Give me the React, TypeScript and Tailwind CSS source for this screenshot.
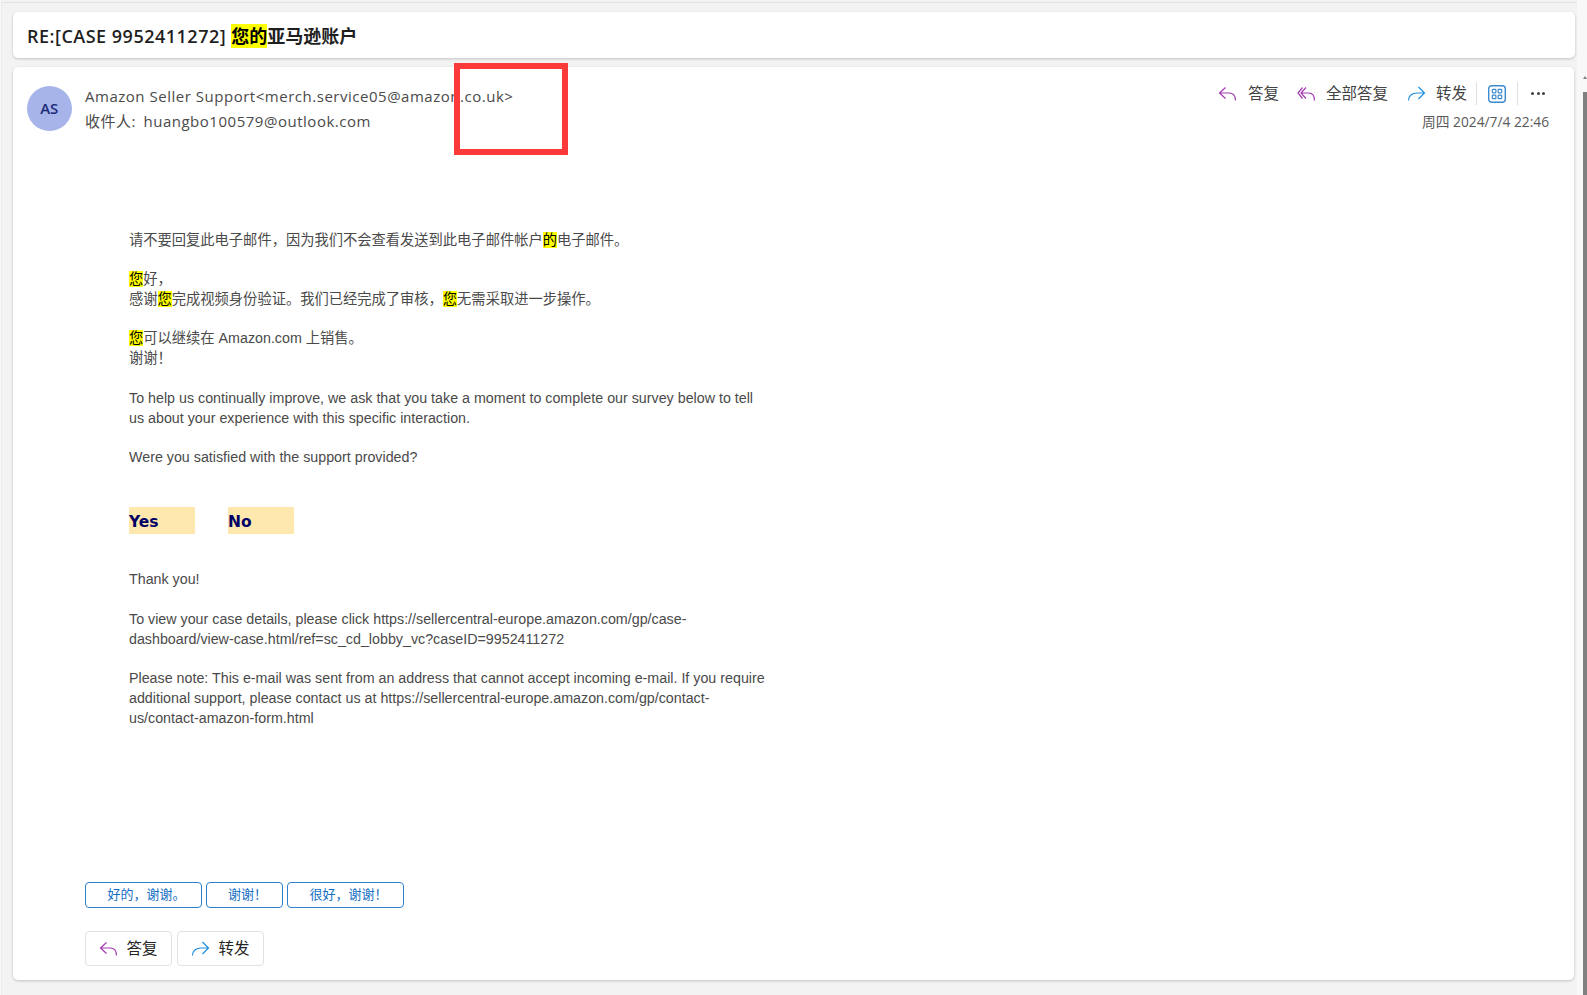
import React from "react";

const CJK = "font-['Open_Sans','Noto_Sans_CJK_SC',sans-serif]";

function ReplyIcon() {
  return (
    <svg width="19" height="16" viewBox="0 0 19 16" fill="none">
      <path d="M7.500 1.500 1.500 7l6 5.500M1.500 7H11c4 0 6.500 2.500 6.500 7.500" stroke="#a33ab0" strokeWidth="1.200" />
    </svg>
  );
}
function ReplyAllIcon() {
  return (
    <svg width="19" height="16" viewBox="0 0 19 16" fill="none">
      <path d="M5.500 1.500 1 7l4.500 5.500M9 1.500 4 7l5 5.500M4 7h7.500c4 0 6 2.500 6 7.500" stroke="#a33ab0" strokeWidth="1.200" />
    </svg>
  );
}
function ForwardIcon() {
  return (
    <svg width="19" height="16" viewBox="0 0 19 16" fill="none">
      <path d="M11.500 1 17.500 7l-6 6M17.500 7H10C5 7 1.500 10 1.500 14.500" stroke="#1f8fe0" strokeWidth="1.200" />
    </svg>
  );
}

const Y = ({ children }: { children: React.ReactNode }) => (
  <span className="bg-[#ffff00] text-black">{children}</span>
);

export default function App() {
  return (
    <div className={`${CJK} relative h-[995px] w-[1587px] overflow-hidden bg-[#f8f8f8]`}>
      <div className="ml-px h-[995px] w-[1576px] border-l border-[#ebebeb] bg-[#f3f3f3] pt-[2px]">
        <div className="h-px bg-[#e2e2e2]" />
        <div className="flex flex-col gap-[9px] pl-[11px] pt-[9px]">
          <div className="flex h-[46px] w-[1562px] items-center rounded-[5px] bg-white pl-[14px] shadow-[0_1px_3px_rgba(0,0,0,0.2)]">
            <h1 className="translate-y-px text-[18px] font-semibold text-[#1f1f1f]">
              <span className="tracking-[0.5px]">RE:[CASE 9952411272] </span><Y>您的</Y>亚马逊账户
            </h1>
          </div>
          <div className="flex h-[913px] w-[1561px] flex-col rounded-[5px] bg-white shadow-[0_1px_3px_rgba(0,0,0,0.2)]">
            <div className="flex justify-between pl-[14px] pr-[25px] pt-[15px]">
              <div className="flex gap-[13.500px]">
                <div className="mt-[4px] flex h-[44.500px] w-[44.500px] items-center justify-center rounded-full bg-[#a6b4ea] pb-px text-[15px] font-semibold text-[#1e2a78]">
                  AS
                </div>
                <div className="mt-[2px] text-[15px] leading-[25px] tracking-[0.52px] text-[#4a4a4a]">
                  <div>Amazon Seller Support&lt;merch.service05@amazon.co.uk&gt;</div>
                  <div>收件人: <span className="ml-[3px]">huangbo100579@outlook.com</span></div>
                </div>
              </div>
              <div className="flex flex-col items-end">
                <div className="flex items-center text-[15.500px] text-[#424242]">
                  <span className="flex items-center gap-[11px]"><ReplyIcon />答复</span>
                  <span className="ml-[18px] flex items-center gap-[10px]"><ReplyAllIcon />全部答复</span>
                  <span className="ml-[19px] flex items-center gap-[10px]"><ForwardIcon />转发</span>
                  <span className="ml-[9px] mr-[11px] h-[23px] w-px bg-[#e0e0e0]" />
                  <svg width="18" height="18" viewBox="0 0 18 18" fill="none">
                    <rect x="0.700" y="0.700" width="16.600" height="16.600" rx="3" stroke="#3b8ad0" strokeWidth="1.400" />
                    <rect x="4.300" y="4.300" width="3.600" height="3.600" rx="0.800" stroke="#3b8ad0" strokeWidth="1.200" />
                    <rect x="10.100" y="4.300" width="3.600" height="3.600" rx="0.800" stroke="#3b8ad0" strokeWidth="1.200" />
                    <rect x="4.300" y="10.100" width="3.600" height="3.600" rx="0.800" stroke="#3b8ad0" strokeWidth="1.200" />
                    <rect x="10.100" y="10.100" width="3.600" height="3.600" rx="0.800" stroke="#3b8ad0" strokeWidth="1.200" />
                  </svg>
                  <span className="ml-[11px] mr-[13px] h-[23px] w-px bg-[#e0e0e0]" />
                  <span className="flex w-[14px] justify-between">
                    <i className="h-[3px] w-[3px] rounded-full bg-[#424242]" />
                    <i className="h-[3px] w-[3px] rounded-full bg-[#424242]" />
                    <i className="h-[3px] w-[3px] rounded-full bg-[#424242]" />
                  </span>
                  <span className="w-[4px]" />
                </div>
                <div className="mt-[7px] text-[13.750px] text-[#5a5a5a]">周四 2024/7/4 22:46</div>
              </div>
            </div>
            <div className="ml-[116px] mt-[96.500px] w-[640px] font-['Liberation_Sans','Noto_Sans_CJK_SC',sans-serif] text-[14.280px] leading-[19.800px] text-[#4a4a4a]">
              <p>请不要回复此电子邮件，因为我们不会查看发送到此电子邮件帐户<Y>的</Y>电子邮件。</p>
              <p className="mt-[19.800px]"><Y>您</Y>好，<br />感谢<Y>您</Y>完成视频身份验证。我们已经完成了审核，<Y>您</Y>无需采取进一步操作。</p>
              <p className="mt-[19.800px]"><Y>您</Y>可以继续在 Amazon.com 上销售。<br />谢谢！</p>
              <p className="mt-[19.800px]">To help us continually improve, we ask that you take a moment to complete our survey below to tell us about your experience with this specific interaction.</p>
              <p className="mt-[19.800px]">Were you satisfied with the support provided?</p>
              <div className="mt-[39px] flex gap-[33px] font-['DejaVu_Sans',sans-serif] text-[15.500px] font-bold text-[#000066]">
                <span className="flex h-[27px] w-[66px] items-center bg-[#ffe8ad] pt-[4px]">Yes</span>
                <span className="flex h-[27px] w-[66px] items-center bg-[#ffe8ad] pt-[4px]">No</span>
              </div>
              <p className="mt-[36px]">Thank you!</p>
              <p className="mt-[20px]">To view your case details, please click https://sellercentral-europe.amazon.com/gp/case-<br />dashboard/view-case.html/ref=sc_cd_lobby_vc?caseID=9952411272</p>
              <p className="mt-[19.800px]">Please note: This e-mail was sent from an address that cannot accept incoming e-mail. If you require additional support, please contact us at https://sellercentral-europe.amazon.com/gp/contact-<br />us/contact-amazon-form.html</p>
            </div>
            <div className="mt-auto pb-[14px] pl-[72px]">
              <div className="flex gap-[4px] text-[13px] text-[#1570c4]">
                <span className="flex h-[26px] w-[117px] items-center justify-center rounded-[4px] border border-[#2f80cc] pl-[6px]">好的，谢谢。</span>
                <span className="flex h-[26px] w-[77px] items-center justify-center rounded-[4px] border border-[#2f80cc] pl-[6px]">谢谢！</span>
                <span className="flex h-[26px] w-[117px] items-center justify-center rounded-[4px] border border-[#2f80cc] pl-[6px]">很好，谢谢！</span>
              </div>
              <div className="mt-[23px] flex gap-[5px] text-[15.500px] text-[#242424]">
                <span className="flex h-[35px] w-[87px] items-center justify-center gap-2 rounded-[4px] border border-[#e1e1e1]"><ReplyIcon />答复</span>
                <span className="flex h-[35px] w-[87px] items-center justify-center gap-2 rounded-[4px] border border-[#e1e1e1]"><ForwardIcon />转发</span>
              </div>
            </div>
          </div>
        </div>
      </div>
      <div className="absolute left-[454px] top-[63px] h-[92px] w-[114px] border-[6px] border-[#fc3a3a]" />
      <div className="absolute bottom-0 right-0 top-[92px] w-[4px] bg-[#808080]" />
      <div className="absolute right-0 top-[76px] h-0 w-0 border-x-[2px] border-b-[3px] border-x-transparent border-b-[#808080]" />
    </div>
  );
}
